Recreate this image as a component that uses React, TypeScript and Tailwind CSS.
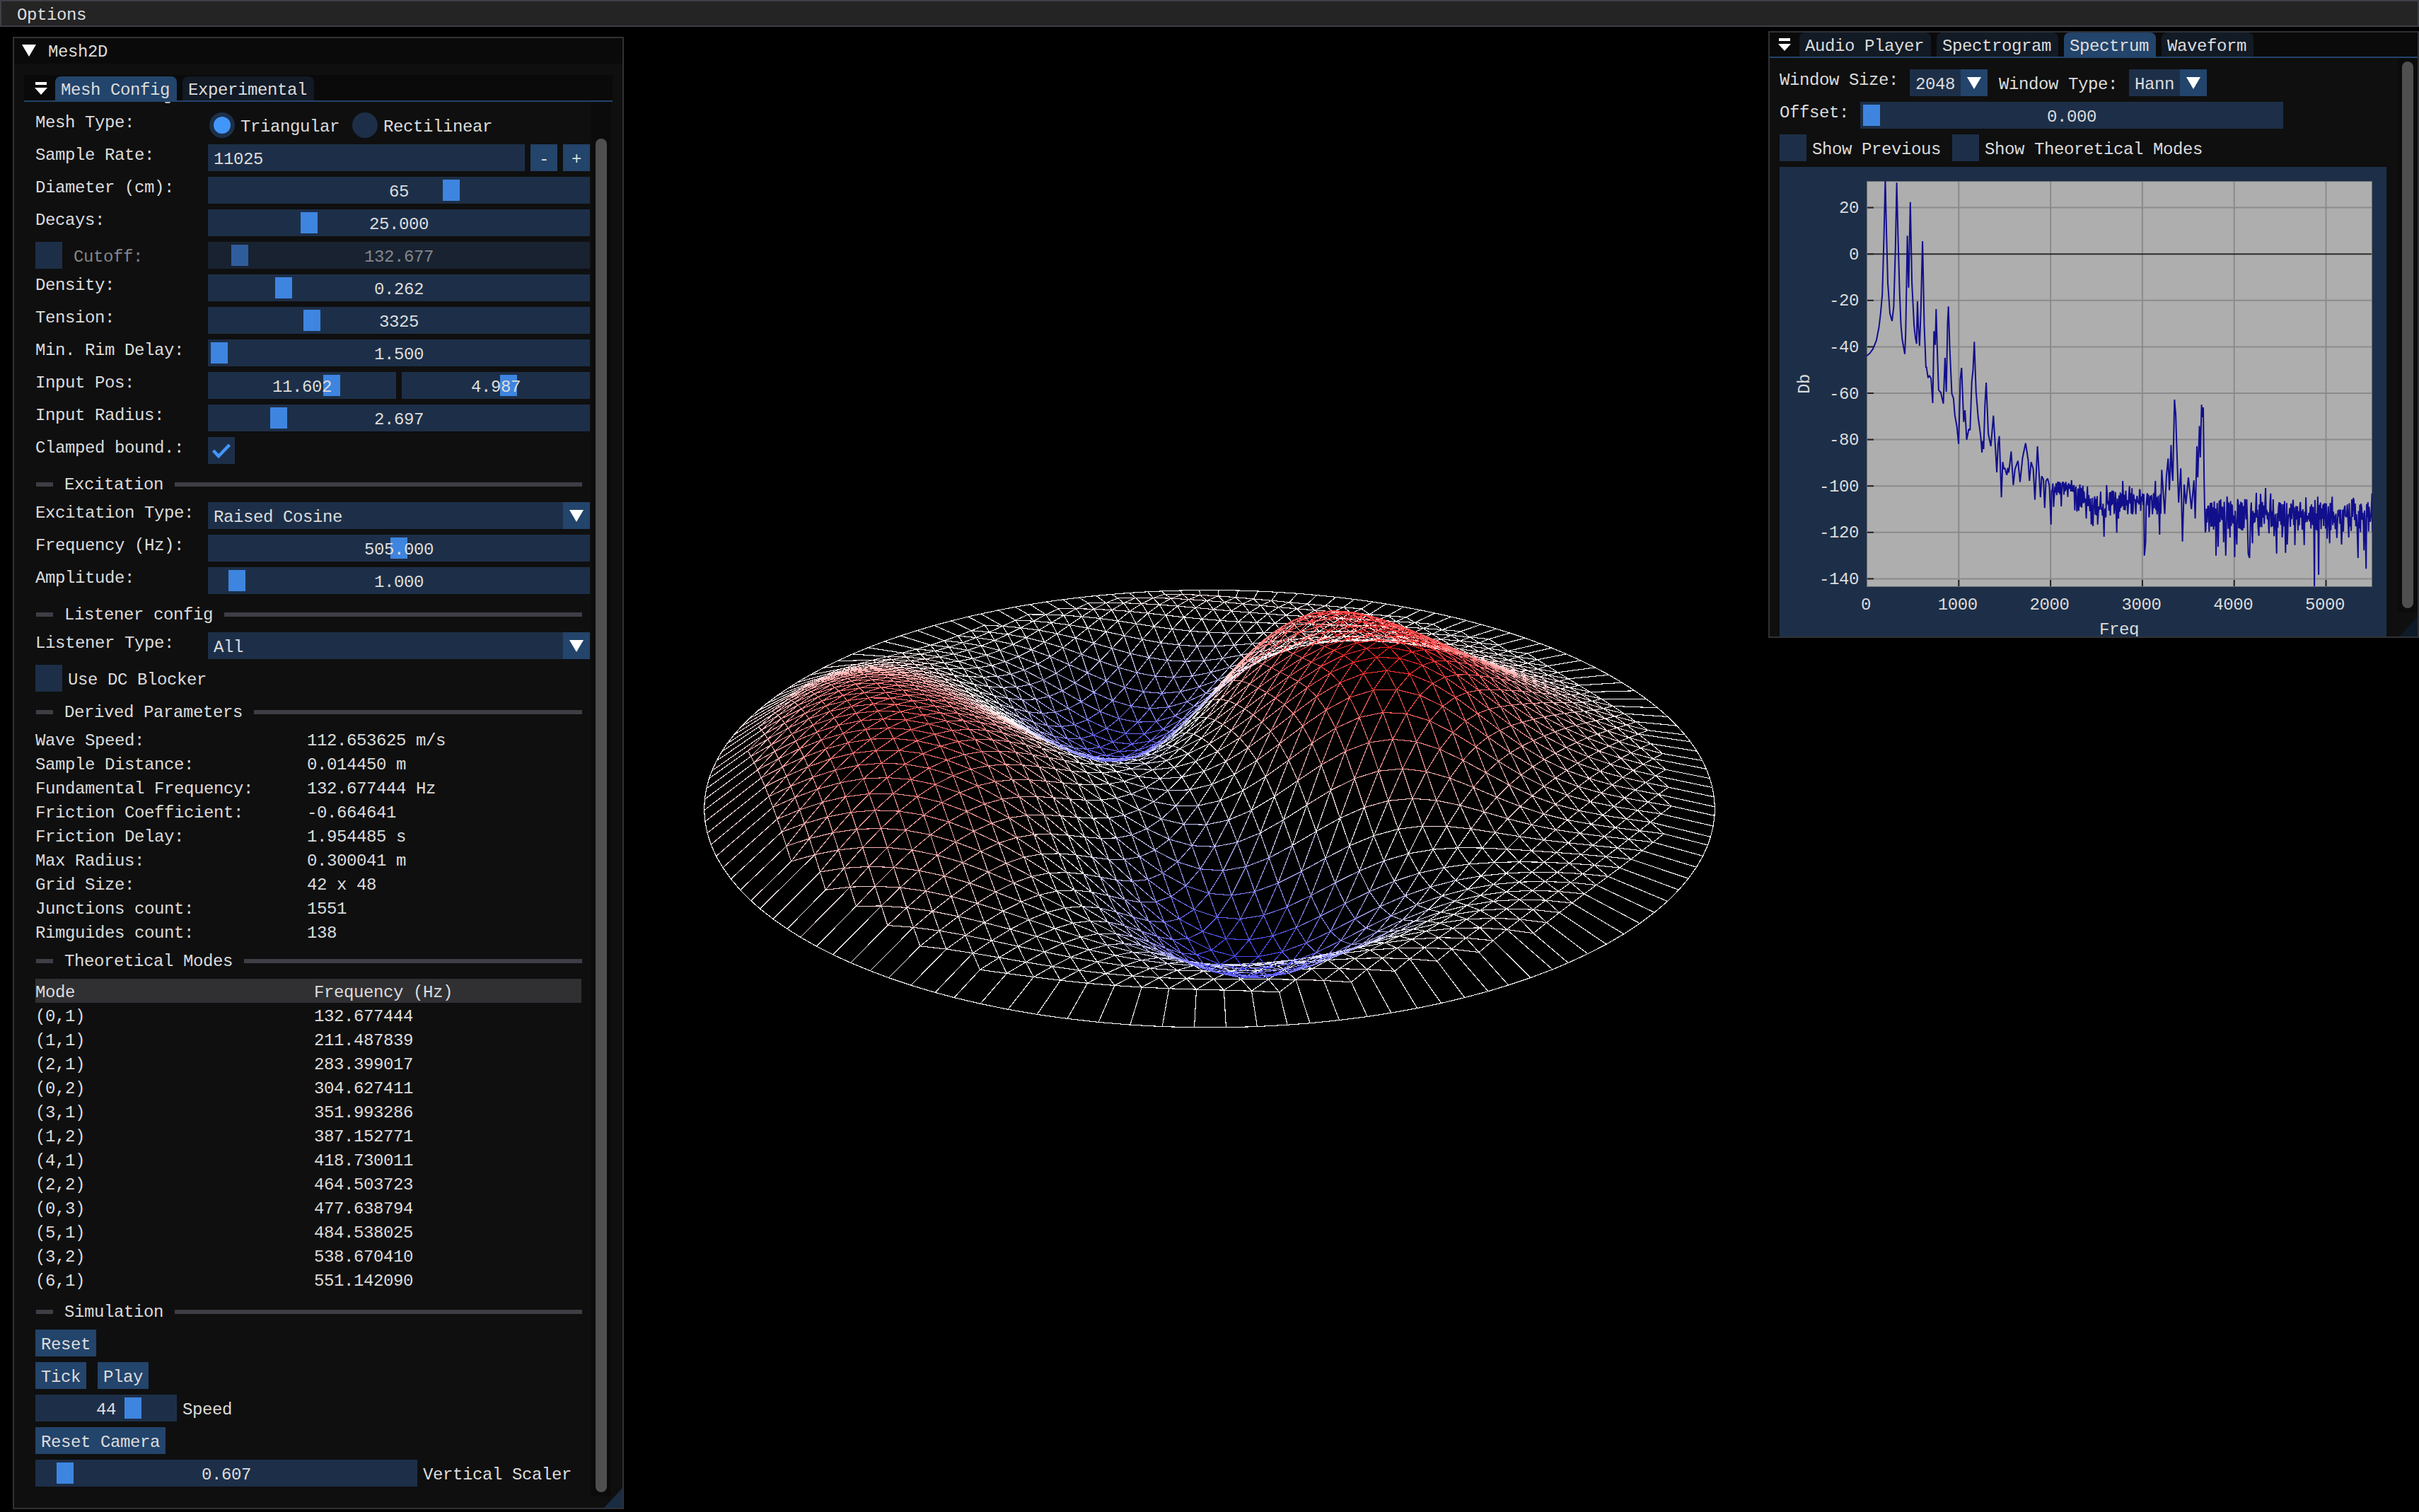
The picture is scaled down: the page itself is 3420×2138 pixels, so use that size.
import React, { type ReactNode } from "react";

/* ---------- membrane ---------- */
const FOCAL = 2603;
const DIST = 3.755;
const COS = 0.9075;
const SIN = 0.42;
const STEP = 0.04446;
const PITCH = 0.038505;
const PHI = (8.5 * Math.PI) / 180;

// [angular order, Bessel zero, cosine amplitude, sine amplitude]
const modes: [number, number, number, number][] = [
  [0, 2.4048, 0.0522, 0], [0, 5.5201, -0.0245, 0], [0, 8.6537, 0.0262, 0], [0, 11.7915, -0.0263, 0],
  [1, 3.8317, 0.0644, -0.0164], [1, 7.0156, 0.1724, -0.0471], [1, 10.1735, 0.0124, -0.0068], [1, 13.3237, -0.0146, 0.0075],
  [2, 5.1356, 0.2435, -0.1395], [2, 8.4172, 0.1115, -0.0683], [2, 11.6198, -0.0198, 0.0169],
  [3, 6.3802, -0.0347, 0.0727], [3, 9.761, -0.0114, 0.0466], [3, 13.0152, -0.0215, 0.0303],
  [4, 7.5883, -0.0089, 0.0187], [4, 11.0647, -0.0338, 0.0578], [4, 14.3725, -0.0077, 0.0167],
  [5, 8.7715, 0.0077, -0.0179], [5, 12.3386, -0.0032, 0.0035],
  [6, 9.9361, 0.0007, 0.0071], [6, 13.5893, -0.0021, -0.0113],
  [7, 11.0864, 0.0031, -0.0049], [8, 12.2251, 0.0052, 0.0007],
];

function bessel(m: number, x: number) {
  const n = 48;
  let s = 0;
  for (let i = 0; i < n; i++) {
    const t = ((i + 0.5) / n) * Math.PI;
    s += Math.cos(m * t - x * Math.sin(t));
  }
  return s / n;
}
const tables = modes.map(([m, k]) => Array.from({ length: 402 }, (_, i) => bessel(m, (k * i) / 400)));

function height(x: number, y: number) {
  const r = Math.min(1, Math.hypot(x, y)) * 400;
  const t = Math.atan2(y, x);
  const i = Math.floor(r);
  const f = r - i;
  return modes.reduce((z, [m, , a, b], q) => {
    const j = tables[q][i] * (1 - f) + tables[q][i + 1] * f;
    return z + j * (a * Math.cos(m * t) + b * Math.sin(m * t));
  }, 0);
}

type P2 = [number, number];
function project(x: number, y: number, z: number): P2 {
  const d = DIST - COS * y - SIN * z;
  return [1710 + (FOCAL * x) / d, 1069 + (FOCAL * (SIN * y - COS * z)) / d];
}
function tint(z: number) {
  const k = Math.min(255, Math.max(0, Math.round((255 * (1 - Math.min(1, Math.abs(z) * 3.4))) / 10) * 10));
  const v = k >= 250 ? 255 : k;
  return z > 0 ? `rgb(255,${v},${v})` : `rgb(${v},${v},255)`;
}

function buildMesh() {
  const paths = new Map<string, string>();
  const seg = (a: P2, b: P2, c: string) =>
    paths.set(c, (paths.get(c) ?? "") + `M${a[0].toFixed(1)} ${a[1].toFixed(1)}L${b[0].toFixed(1)} ${b[1].toFixed(1)}`);
  const nodes = new Map<string, { r: number; j: number; x: number; y: number; z: number; p: P2 }>();
  for (let r = -23; r <= 23; r++) {
    for (let j = -42; j <= 42; j++) {
      if (Math.abs(j % 2) !== Math.abs(r % 2) || (j * j) / 4 + 0.75 * r * r > 431.15) continue;
      const a = (j / 2) * STEP;
      const rho = r * PITCH;
      const x = a * Math.cos(PHI) - rho * Math.sin(PHI);
      const y = a * Math.sin(PHI) + rho * Math.cos(PHI);
      const z = height(x, y);
      nodes.set(`${r},${j}`, { r, j, x, y, z, p: project(x, y, z) });
    }
  }
  const rim: number[] = [];
  for (const n of nodes.values()) {
    let degree = 0;
    for (const [dr, dj] of [[0, 2], [1, 1], [1, -1], [0, -2], [-1, 1], [-1, -1]]) {
      const m = nodes.get(`${n.r + dr},${n.j + dj}`);
      if (!m) continue;
      degree++;
      if (dr > 0 || (dr === 0 && dj > 0)) seg(n.p, m.p, tint((n.z + m.z) / 2));
    }
    if (degree < 6) {
      const t = Math.atan2(n.y, n.x);
      rim.push(t);
      seg(n.p, project(Math.cos(t), Math.sin(t), 0), tint(n.z / 2));
    }
  }
  rim.sort((a, b) => a - b);
  rim.forEach((t, i) => {
    const u = rim[(i + 1) % rim.length];
    seg(project(Math.cos(t), Math.sin(t), 0), project(Math.cos(u), Math.sin(u), 0), "rgb(255,255,255)");
  });
  return [...paths];
}
const mesh = buildMesh();

/* ---------- widgets ---------- */
function T({ children, className = "" }: { children: ReactNode; className?: string }) {
  return <span className={`block h-[26px] leading-[31px] whitespace-pre ${className}`}>{children}</span>;
}
function Slider({ width, grab, value, dim }: { width: number; grab: number; value: string; dim?: boolean }) {
  return (
    <div className={`relative flex h-[38px] items-center justify-center ${dim ? "bg-[#182231] text-[#83868a]" : "bg-[#1d2f48]"}`} style={{ width }}>
      <div className={`absolute top-1 h-[30px] w-6 ${dim ? "bg-[#2f5d9b]" : "bg-[#3e85e0]"}`} style={{ left: grab }} />
      <T className="relative">{value}</T>
    </div>
  );
}
function Tri({ className = "" }: { className?: string }) {
  return <svg className={className} width="20" height="17" viewBox="0 0 20 17"><path d="M0 0H20L10 17Z" fill="#fff" /></svg>;
}
function Combo({ width, value }: { width: number; value: string }) {
  return (
    <div className="flex h-[38px] bg-[#1d2f48]" style={{ width }}>
      <T className="mt-[6px] flex-1 pl-2">{value}</T>
      <div className="flex w-[38px] items-center justify-center bg-[#23446b]"><Tri /></div>
    </div>
  );
}
function Row({ label, children }: { label: string; children: ReactNode }) {
  return <div className="flex h-[38px]"><T className="w-[244px]">{label}</T>{children}</div>;
}
function Separator({ label }: { label: string }) {
  return (
    <div className="flex h-[38px] w-[773px] items-start">
      <div className="mt-[18px] ml-px h-[6px] w-6 bg-[#3e3e46]" />
      <T className="mx-[16px] mt-[6px]">{label}</T>
      <div className="mt-[18px] h-[6px] flex-1 bg-[#3e3e46]" />
    </div>
  );
}
function Button({ children }: { children: string }) {
  return <div className="flex h-[38px] items-center bg-[#23446b] px-2"><T>{children}</T></div>;
}
function Radio({ label, selected }: { label: string; selected?: boolean }) {
  return (
    <div className="flex items-center gap-2">
      <div className="flex size-[38px] items-center justify-center pl-px">
        <div className="flex size-[36px] items-center justify-center rounded-full bg-[#1d2f48]">
          {selected && <div className="size-6 rounded-full bg-[#4296fa]" />}
        </div>
      </div>
      <T>{label}</T>
    </div>
  );
}
function Check({ label, checked, gap = "gap-2", dim }: { label?: string; checked?: boolean; gap?: string; dim?: boolean }) {
  return (
    <div className={`flex items-center ${gap}`}>
      <div className="flex size-[38px] items-center justify-center bg-[#1d2f48]">
        {checked && <svg width="38" height="38" viewBox="0 0 38 38"><path d="M7.500 19L15 27L30.500 11" fill="none" stroke="#4296fa" strokeWidth="4.500" /></svg>}
      </div>
      {label && <T className={dim ? "text-[#83868a]" : ""}>{label}</T>}
    </div>
  );
}
function Tab({ label, active }: { label: string; active?: boolean }) {
  return (
    <div className={`flex h-[34px] items-start rounded-t-[8px] pr-[10px] pl-2 ${active ? "bg-[#23446b]" : "bg-[#121a25]"}`}>
      <T className="mt-1">{label}</T>
    </div>
  );
}
function TabMenu() {
  return <svg width="18" height="20" viewBox="0 0 18 20"><path d="M1 0H17V4H1ZM0 8H18L9 18Z" fill="#fff" /></svg>;
}

/* ---------- mesh window ---------- */
const derived = [
  ["Wave Speed:", "112.653625 m/s"], ["Sample Distance:", "0.014450 m"], ["Fundamental Frequency:", "132.677444 Hz"],
  ["Friction Coefficient:", "-0.664641"], ["Friction Delay:", "1.954485 s"], ["Max Radius:", "0.300041 m"],
  ["Grid Size:", "42 x 48"], ["Junctions count:", "1551"], ["Rimguides count:", "138"],
];
const theory = [
  ["(0,1)", "132.677444"], ["(1,1)", "211.487839"], ["(2,1)", "283.399017"], ["(0,2)", "304.627411"],
  ["(3,1)", "351.993286"], ["(1,2)", "387.152771"], ["(4,1)", "418.730011"], ["(2,2)", "464.503723"],
  ["(0,3)", "477.638794"], ["(5,1)", "484.538025"], ["(3,2)", "538.670410"], ["(6,1)", "551.142090"],
];

function MeshWindow() {
  return (
    <div className="absolute top-[52px] left-[18px] flex h-[2082px] w-[864px] flex-col overflow-hidden border-2 border-[#313136] bg-[#0f0f0f]">
      <div className="flex h-[36px] shrink-0 items-start bg-[#0a0a0a] pl-[11px]">
        <Tri className="mt-[9px]" />
        <T className="ml-[17px] mt-1">Mesh2D</T>
      </div>
      <div className="mx-[14px] mt-4 flex h-[38px] shrink-0 items-start border-b-2 border-[#23446b] bg-[#0a0a0a] pt-[2px] pl-[15px]">
        <div className="mr-[11px] mt-2"><TabMenu /></div>
        <div className="flex gap-2"><Tab label="Mesh Config" active /><Tab label="Experimental" /></div>
      </div>
      <div className="mx-[14px] flex h-[1972px]">
        <div className="relative flex w-[802px] flex-col gap-2 pt-[14px] pl-4">
          <div className="absolute top-0 left-[199px] h-[2px] w-2 rounded-b bg-[#b8b8b8]" />
          <div className="flex h-[38px]">
            <T className="w-[244px]">Mesh Type:</T>
            <div className="flex gap-4"><Radio label="Triangular" selected /><Radio label="Rectilinear" /></div>
          </div>
          <Row label="Sample Rate:">
            <div className="flex gap-2">
              <div className="flex w-[448px] items-center bg-[#1d2f48] pl-2"><T>11025</T></div>
              <div className="flex size-[38px] items-center justify-center bg-[#23446b]"><T>-</T></div>
              <div className="flex size-[38px] items-center justify-center bg-[#23446b]"><T>+</T></div>
            </div>
          </Row>
          <Row label="Diameter (cm):"><Slider width={540} grab={332} value="65" /></Row>
          <Row label="Decays:"><Slider width={540} grab={131} value="25.000" /></Row>
          <div className="flex h-[38px]">
            <div className="w-[244px]"><Check label="Cutoff:" gap="gap-4" dim /></div>
            <Slider width={540} grab={33} value="132.677" dim />
          </div>
          <Row label="Density:"><Slider width={540} grab={95} value="0.262" /></Row>
          <Row label="Tension:"><Slider width={540} grab={135} value="3325" /></Row>
          <Row label="Min. Rim Delay:"><Slider width={540} grab={4} value="1.500" /></Row>
          <Row label="Input Pos:">
            <div className="flex gap-2"><Slider width={266} grab={163} value="11.602" /><Slider width={266} grab={139} value="4.987" /></div>
          </Row>
          <Row label="Input Radius:"><Slider width={540} grab={88} value="2.697" /></Row>
          <Row label="Clamped bound.:"><Check checked /></Row>
          <Separator label="Excitation" />
          <Row label="Excitation Type:"><Combo width={540} value="Raised Cosine" /></Row>
          <Row label="Frequency (Hz):"><Slider width={540} grab={258} value="505.000" /></Row>
          <Row label="Amplitude:"><Slider width={540} grab={29} value="1.000" /></Row>
          <Separator label="Listener config" />
          <Row label="Listener Type:"><Combo width={540} value="All" /></Row>
          <Check label="Use DC Blocker" />
          <Separator label="Derived Parameters" />
          {derived.map(([k, v]) => <div key={k} className="flex"><T className="w-[384px]">{k}</T><T>{v}</T></div>)}
          <Separator label="Theoretical Modes" />
          <div className="w-[772px]">
            <div className="flex h-[34px] bg-[#303033] pt-1"><T className="w-[394px]">Mode</T><T>Frequency (Hz)</T></div>
            {theory.map(([k, v]) => <div key={k} className="flex h-[34px] pt-1"><T className="w-[394px]">{k}</T><T>{v}</T></div>)}
          </div>
          <Separator label="Simulation" />
          <div className="flex"><Button>Reset</Button></div>
          <div className="flex gap-4"><Button>Tick</Button><Button>Play</Button></div>
          <div className="flex items-center gap-2"><Slider width={200} grab={126} value="44" /><T>Speed</T></div>
          <div className="flex"><Button>Reset Camera</Button></div>
          <div className="flex items-center gap-2"><Slider width={540} grab={30} value="0.607" /><T>Vertical Scaler</T></div>
        </div>
        <div className="w-[28px] bg-[#0b0b0b] pt-[52px] pl-[6px]"><div className="h-[1914px] w-4 rounded-full bg-[#4f4f4f]" /></div>
      </div>
      <svg className="absolute right-0 bottom-0" width="26" height="28"><path d="M26 0V28H0Z" fill="#1a2c42" /></svg>
    </div>
  );
}

/* ---------- spectrum ---------- */
const peaks = [
  265,190,272,180,280,160,288,125,294,70,298,10,302,-70,306,-320,309,-560,312,-320,315,-120,320,10,325,42,329,-20,333,-270,336,-545,339,-320,343,-70,346,60,349,120,355,182,357,100,359,-100,361,-320,364,-100,368,-463,372,-120,377,60,380,110,383,138,385,-42,387,60,390,147,393,0,397,-297,401,60,405,240,406,235,410,283,413,273,417,285,421,390,424,85,427,143,429,-9,432,180,435,335,440,345,446,392,450,198,453,342,456,50,458,-20,461,150,466,350,470,370,473,440,478,490,482,563,486,290,489,240,494,470,497,420,501,545,506,500,509,505,513,300,516,250,519,130,523,340,528,450,534,530,537,600,539,550,541,585,544,400,547,303,552,520,558,573,564,443,568,560,572,684,575,565,578,530,583,790,586,640,589,670,591,665,594,685,596,695,598,665,600,685,602,660,606,595,611,738,615,670,619,650,622,635,627,725,633,620,640,560,646,630,649,720,653,640,658,670,662,800,668,573,675,790,678,700,682,715,685,835,688,720,692,710,696,740,
  700,905,706,830,709,745,715,735,724,828,729,725,741,730,756,845,761,850,768,735,775,740,783,880,789,780,795,905,799,912,803,785,810,905,817,765,825,957,831,738,849,860,855,940,859,880,869,720,881,862,885,742,892,862,900,862,910,762,920,1037,923,980,927,772,931,875,939,862,946,720,950,862,956,948,961,673,968,860,972,700,976,625,979,760,983,568,985,680,987,720,991,375,994,440,996,550,1001,812,1006,667,1010,977,1014,735,1018,818,1024,705,1031,840,1037,718,1040,880,1044,573,1046,705,1050,487,1052,620,1055,397,1057,450,1059,408,1061,720,
  1065,925,1070,828,1076,813,1089,1037,1094,1000,1100,798,1107,980,1112,1037,1115,786,1122,960,1126,820,1133,1043,1138,990,1140,797,1157,797,1165,1030,1168,1047,1171,840,1175,985,1184,770,1190,953,1194,775,1206,750,1214,943,1218,773,1226,955,1232,1028,1238,810,1245,960,1253,1025,1257,990,1271,800,1275,992,1288,810,1297,992,1301,790,1314,820,1321,1167,1329,787,1331,1118,1346,820,1351,965,1357,985,1363,787,1374,962,1385,990,1393,825,1402,960,1413,792,1424,1047,1431,817,1438,1015,1443,1093,1450,830,1455,860,1457,773,1458,935,
];
function spectrum() {
  let seed = 7;
  const rnd = () => (seed = (seed * 16807) % 2147483647) / 2147483647;
  const out: string[] = [];
  const put = (x: number, y: number) => out.push(`${((x - 265) / 1.668 + 123).toFixed(1)},${(204 + y / 3).toFixed(1)}`);
  let up = 1;
  for (let i = 0; i < peaks.length; i += 2) {
    const x0 = peaks[i];
    const x1 = peaks[i + 2];
    put(x0, peaks[i + 1]);
    if (x1 && x0 >= 700 && x1 - x0 > 3.4 && !(x0 > 960 && x0 < 1061)) {
      for (let x = x0 + 1.3; x < x1 - 1; x += 1.5) {
        const mean = x < 760 ? 755 : x < 790 ? 800 : x < 830 ? 835 : x < 960 ? 808 : 868;
        const amp = x < 760 ? 34 : x < 960 ? 52 : 66;
        up = -up;
        put(x, mean + up * rnd() * amp + (rnd() - 0.5) * 16);
      }
    }
  }
  return out.join(" ");
}
const yTicks = [20, 0, -20, -40, -60, -80, -100, -120, -140];
const xTicks = [0, 1000, 2000, 3000, 4000, 5000];

function Plot() {
  return (
    <svg className="block bg-[#1d2f48]" width="858" height="664" fill="#dcdcdc">
      <clipPath id="area"><rect x="123" y="20" width="715" height="574" /></clipPath>
      <rect x="123" y="20" width="715" height="574" fill="#aeaeae" />
      {xTicks.slice(1).map((v) => {
        const x = 123.5 + v * 0.1298;
        return <g key={v}><path d={`M${x} 20V594`} stroke="#8b8b8b" strokeWidth="2" /><path d={`M${x} 594v-10`} stroke="#222" strokeWidth="2" /></g>;
      })}
      {yTicks.map((v) => {
        const y = 123.2 - v * 3.28;
        return (
          <g key={v}>
            <path d={`M123 ${y}H838`} stroke={v ? "#8b8b8b" : "#2c2c2c"} strokeWidth="2" />
            <path d={`M123 ${y}h10`} stroke="#222" strokeWidth="2" />
            <text x="112" y={y + 7.5} textAnchor="end">{v}</text>
          </g>
        );
      })}
      {xTicks.map((v) => <text key={v} x={122 + v * 0.1298} y="626" textAnchor="middle">{v}</text>)}
      <rect x="123.500" y="20.500" width="714" height="573" fill="none" stroke="#6a6c74" strokeWidth="1" />
      <polyline points={spectrum()} clipPath="url(#area)" fill="none" stroke="#120f8c" strokeWidth="2" strokeLinejoin="bevel" />
      <text x="480" y="661" textAnchor="middle">Freq</text>
      <text transform="translate(42 307) rotate(-90)" textAnchor="middle">Db</text>
    </svg>
  );
}
function AudioWindow() {
  return (
    <div className="absolute top-[44px] left-[2500px] h-[858px] w-[920px] overflow-hidden border-2 border-[#313136] bg-[#0f0f0f]">
      <div className="flex h-[36px] items-start border-b-2 border-[#23446b] bg-[#0a0a0a] pl-[12px]">
        <div className="mr-3 mt-2"><TabMenu /></div>
        <div className="flex gap-2"><Tab label="Audio Player" /><Tab label="Spectrogram" /><Tab label="Spectrum" active /><Tab label="Waveform" /></div>
      </div>
      <div className="flex h-[818px]">
        <div className="flex w-[888px] flex-col gap-2 pt-4 pl-[14px]">
          <div className="flex">
            <T className="w-[184px]">Window Size:</T><Combo width={110} value="2048" />
            <T className="mt-[6px] ml-4 w-[184px]">Window Type:</T><Combo width={110} value="Hann" />
          </div>
          <div className="flex"><T className="w-[114px]">Offset:</T><Slider width={598} grab={4} value="0.000" /></div>
          <div className="flex gap-4"><Check label="Show Previous" /><Check label="Show Theoretical Modes" /></div>
          <Plot />
        </div>
        <div className="h-[784px] w-[28px] bg-[#0b0b0b] pt-[5px] pl-[6px]"><div className="h-[773px] w-4 rounded-full bg-[#4f4f4f]" /></div>
      </div>
      <svg className="absolute right-0 bottom-0" width="26" height="28"><path d="M26 0V28H0Z" fill="#0e1a28" /></svg>
    </div>
  );
}

export default function App() {
  return (
    <div className="relative h-[2138px] w-[3420px] overflow-hidden bg-black font-['Liberation_Mono',monospace] text-[24px] tracking-[-0.4px] text-[#dcdcdc]">
      <svg className="absolute inset-0" width="3420" height="2138" shapeRendering="crispEdges" fill="none" strokeWidth="1.120">
        {mesh.map(([c, d]) => <path key={c} d={d} stroke={c} />)}
      </svg>
      <div className="relative flex h-[38px] items-start border-2 border-[#3e3e46] bg-[#242424] pl-[22px]"><T className="mt-1">Options</T></div>
      <MeshWindow />
      <AudioWindow />
    </div>
  );
}
